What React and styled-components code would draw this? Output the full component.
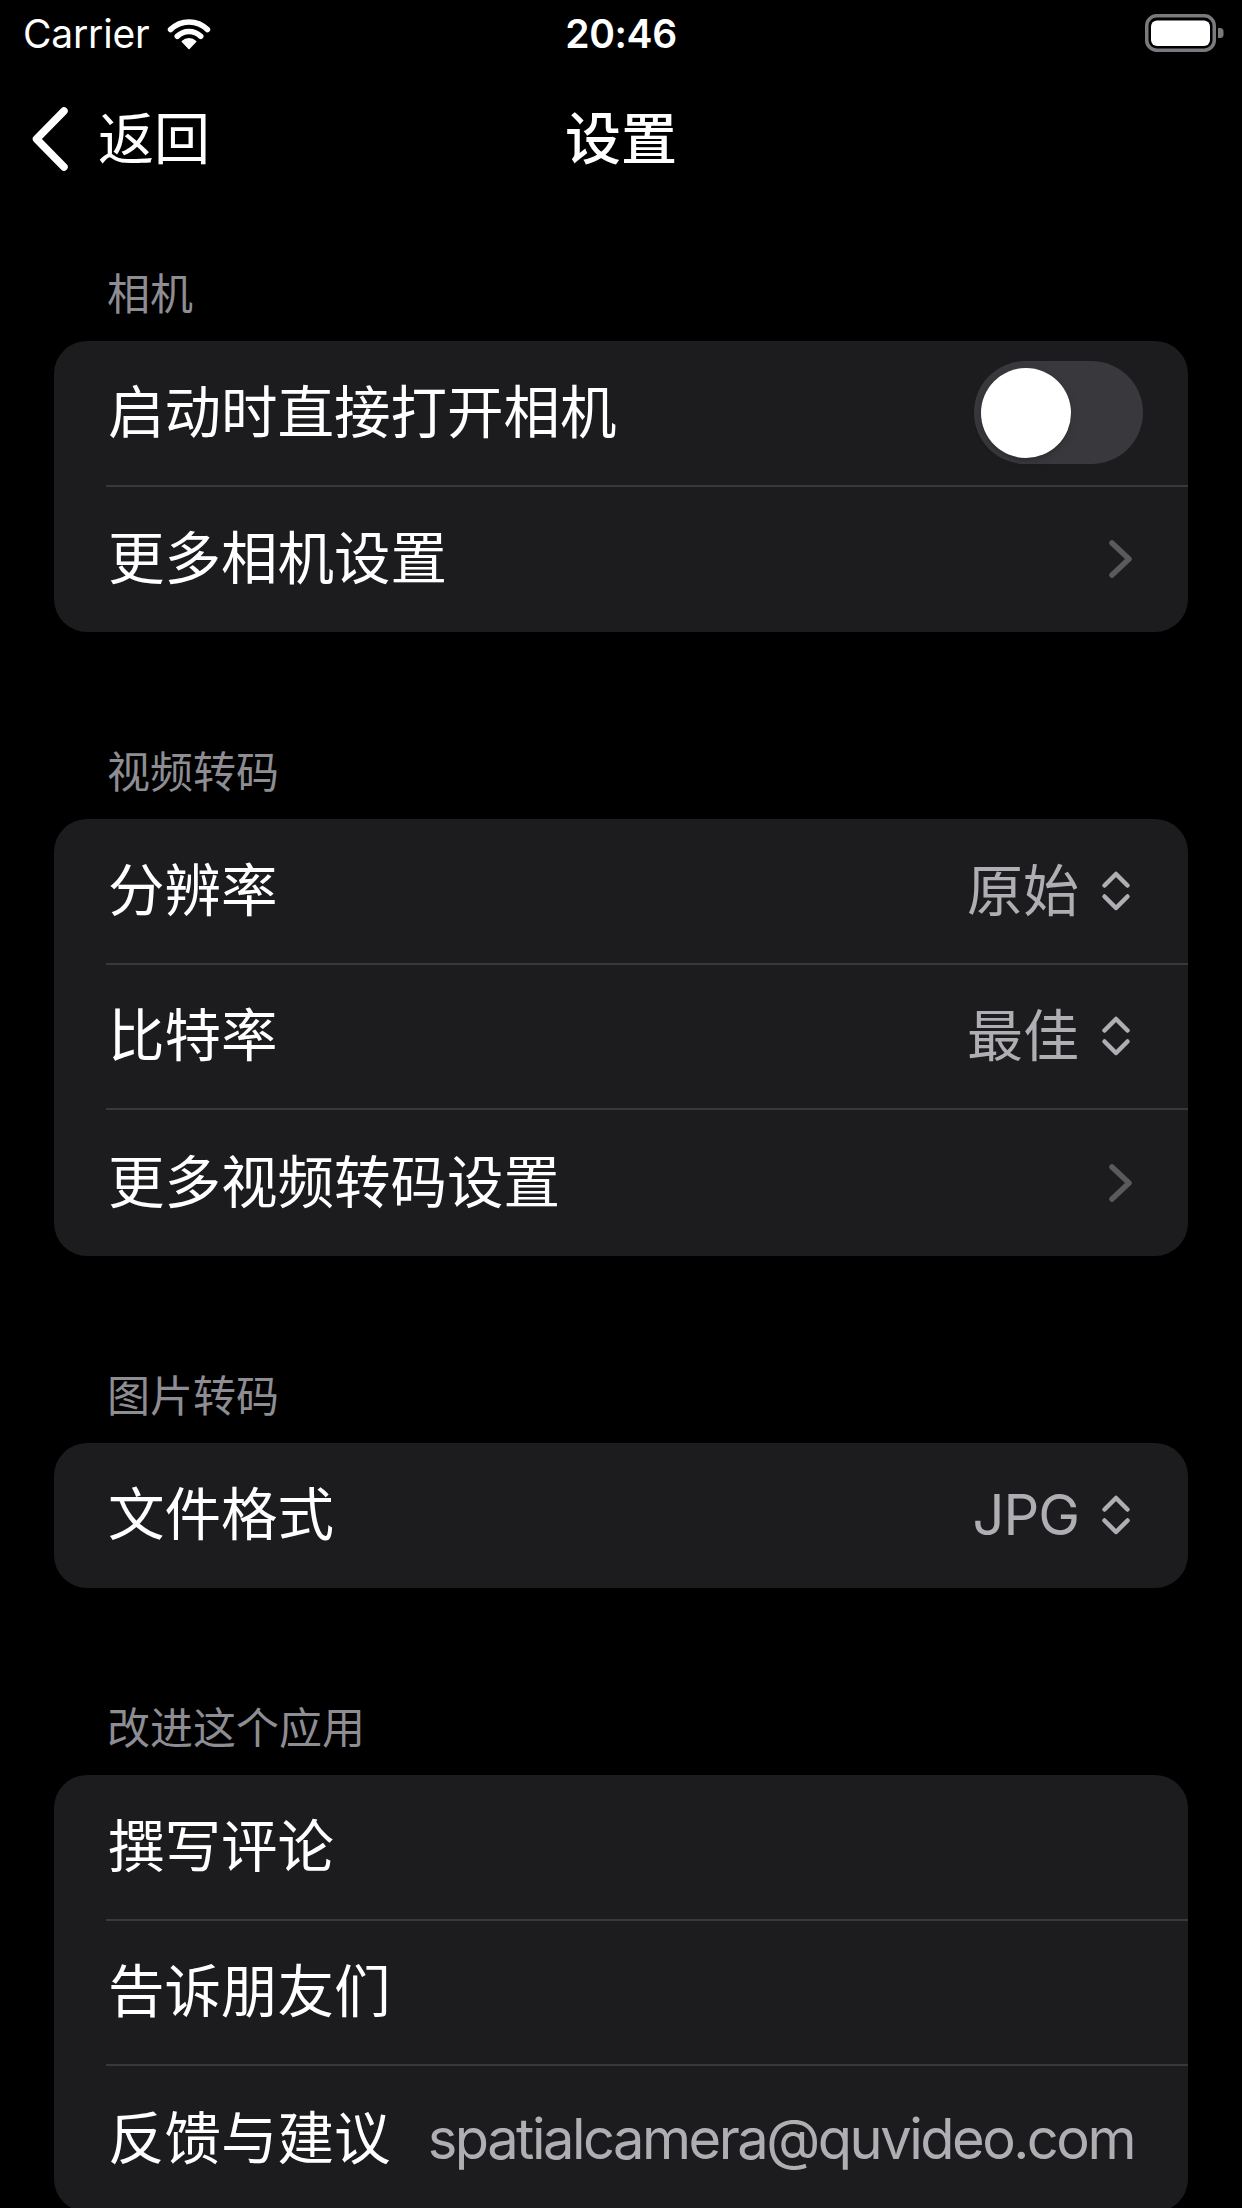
import styled, { createGlobalStyle } from 'styled-components'

const GlobalStyle = createGlobalStyle`
	html, body {
		margin: 0;
		padding: 0;
		background: #000;
	}
	* {
		box-sizing: border-box;
	}
`

const FONT = `"Inter", "Noto Sans CJK SC", "Noto Sans", sans-serif`

const Screen = styled.div`
	width: 1242px;
	height: 2208px;
	overflow: hidden;
	background: #000;
	color: #fff;
	font-family: ${FONT};
`

// status bar
const StatusBar = styled.div`
	height: 66px;
	display: grid;
	grid-template-columns: 1fr auto 1fr;
	align-items: center;
	padding: 0 17px;
`
const Carrier = styled.div`
	display: flex;
	align-items: center;
	gap: 16px;
	padding-left: 6px;
	font-size: 39px;
	letter-spacing: -0.2px;
	line-height: 1;
`
const Clock = styled.div`
	font-size: 39px;
	font-weight: 600;
	line-height: 1;
	letter-spacing: -0.4px;
`
const BatteryWrap = styled.div`
	justify-self: end;
	display: flex;
	align-items: center;
	padding-top: 1px;
`

// nav bar
const NavBar = styled.div`
	height: 146px;
	display: grid;
	grid-template-columns: 1fr auto 1fr;
	align-items: center;
`
const BackButton = styled.div`
	display: flex;
	align-items: center;
	gap: 29px;
	padding-left: 31px;
	font-size: 56px;
	line-height: 1;
`
const NavTitle = styled.div`
	font-size: 56px;
	font-weight: 500;
	line-height: 1;
`

// list
const Content = styled.div`
	padding: 36px 54px 0;
`
const Section = styled.section`
	& + & {
		margin-top: 94px;
	}
`
const SectionHeader = styled.div`
	height: 93px;
	display: flex;
	align-items: center;
	padding-left: 53px;
	font-size: 43px;
	line-height: 1;
	color: #8d8d93;
`
const Card = styled.div`
	background: #1c1c1e;
	border-radius: 33px;
	overflow: hidden;
`
const Row = styled.div`
	height: 145.5px;
	margin-left: 52px;
	padding: 0 ${({ $pr }) => $pr ?? 54}px 0 2px;
	display: flex;
	align-items: center;
	justify-content: space-between;
	border-bottom: 2px solid #38383a;
	&:last-child {
		border-bottom: none;
	}
`
const Label = styled.span`
	font-size: 56.5px;
	line-height: 1;
	color: #fff;
	white-space: nowrap;
`
const Value = styled.span`
	display: flex;
	align-items: center;
	gap: 22px;
	font-size: 56px;
	line-height: 1;
	color: #aeaeb3;
	white-space: nowrap;
	letter-spacing: ${({ $tight }) => $tight ?? 0}px;
`
const Toggle = styled.div`
	width: 169px;
	height: 103px;
	border-radius: 52px;
	background: #39393d;
	padding: 6.5px;
	display: flex;
	justify-content: ${({ $on }) => ($on ? 'flex-end' : 'flex-start')};
`
const Knob = styled.div`
	width: 90px;
	height: 90px;
	border-radius: 50%;
	background: #fff;
	box-shadow: 0 3px 8px rgba(0, 0, 0, 0.15), 0 3px 1px rgba(0, 0, 0, 0.06);
`

const Wifi = () => (
	<svg width="48" height="33" viewBox="0 0 48 33">
		<g fill="none" stroke="#fff" strokeWidth="5.6" strokeLinecap="round">
			<path d="M5.6 12.6 A26 26 0 0 1 42.4 12.6" />
			<path d="M12.3 19.3 A16.5 16.5 0 0 1 35.7 19.3" />
		</g>
		<path d="M24 31.5 L17.3 24.6 A9.5 9.5 0 0 1 30.7 24.6 Z" fill="#fff" stroke="#fff" strokeWidth="1.5" strokeLinejoin="round" />
	</svg>
)

const Battery = () => (
	<svg width="80" height="39" viewBox="0 0 80 39">
		<rect x="1.75" y="1.75" width="67.5" height="34.5" rx="10" fill="none" stroke="#7a7a7e" strokeWidth="3.5" />
		<rect x="6" y="6.5" width="59" height="25.5" rx="6" fill="#fff" />
		<path d="M73 14 h2 a3.5 3.5 0 0 1 3.5 3.5 v3 a3.5 3.5 0 0 1 -3.5 3.5 h-2 Z" fill="#7a7a7e" />
	</svg>
)

const BackChevron = () => (
	<svg width="38" height="64" viewBox="0 0 38 64">
		<path d="M33 4 L5.5 32 L33 60" fill="none" stroke="#fff" strokeWidth="7.5" strokeLinecap="round" strokeLinejoin="round" />
	</svg>
)

const Disclosure = () => (
	<svg width="26" height="40" viewBox="0 0 26 40">
		<path d="M4 4 L21 20 L4 36" fill="none" stroke="#5a5a5e" strokeWidth="5.5" strokeLinecap="round" strokeLinejoin="round" />
	</svg>
)

const UpDown = () => (
	<svg width="30" height="42" viewBox="0 0 30 42">
		<g fill="none" stroke="#aeaeb3" strokeWidth="4.5" strokeLinecap="round" strokeLinejoin="round">
			<path d="M3.5 15.5 L15 4 L26.5 15.5" />
			<path d="M3.5 26.5 L15 38 L26.5 26.5" />
		</g>
	</svg>
)

const sections = [
	{
		title: '相机',
		rows: [
			{ label: '启动时直接打开相机', kind: 'toggle' },
			{ label: '更多相机设置', kind: 'link' },
		],
	},
	{
		title: '视频转码',
		rows: [
			{ label: '分辨率', kind: 'menu', value: '原始' },
			{ label: '比特率', kind: 'menu', value: '最佳' },
			{ label: '更多视频转码设置', kind: 'link' },
		],
	},
	{
		title: '图片转码',
		rows: [{ label: '文件格式', kind: 'menu', value: 'JPG', tight: -1 }],
	},
	{
		title: '改进这个应用',
		rows: [
			{ label: '撰写评论' },
			{ label: '告诉朋友们' },
			{ label: '反馈与建议', kind: 'text', value: 'spatialcamera@quvideo.com', tight: -2.5 },
		],
	},
]

const SettingsRow = ({ row }) => {
	if (row.kind === 'toggle') {
		return (
			<Row $pr={45}>
				<Label>{row.label}</Label>
				<Toggle $on={false}>
					<Knob />
				</Toggle>
			</Row>
		)
	}
	return (
		<Row $pr={row.kind === 'menu' ? 57 : 54}>
			<Label>{row.label}</Label>
			{row.kind === 'link' && <Disclosure />}
			{row.kind === 'menu' && (
				<Value $tight={row.tight}>
					{row.value}
					<UpDown />
				</Value>
			)}
			{row.kind === 'text' && <Value $tight={row.tight}>{row.value}</Value>}
		</Row>
	)
}

export default function App() {
	return (
		<>
			<GlobalStyle />
			<Screen>
				<StatusBar>
					<Carrier>
						Carrier
						<Wifi />
					</Carrier>
					<Clock>20:46</Clock>
					<BatteryWrap>
						<Battery />
					</BatteryWrap>
				</StatusBar>
				<NavBar>
					<BackButton>
						<BackChevron />
						返回
					</BackButton>
					<NavTitle>设置</NavTitle>
					<div />
				</NavBar>
				<Content>
					{sections.map((s) => (
						<Section key={s.title}>
							<SectionHeader>{s.title}</SectionHeader>
							<Card>
								{s.rows.map((r) => (
									<SettingsRow key={r.label} row={r} />
								))}
							</Card>
						</Section>
					))}
				</Content>
			</Screen>
		</>
	)
}
